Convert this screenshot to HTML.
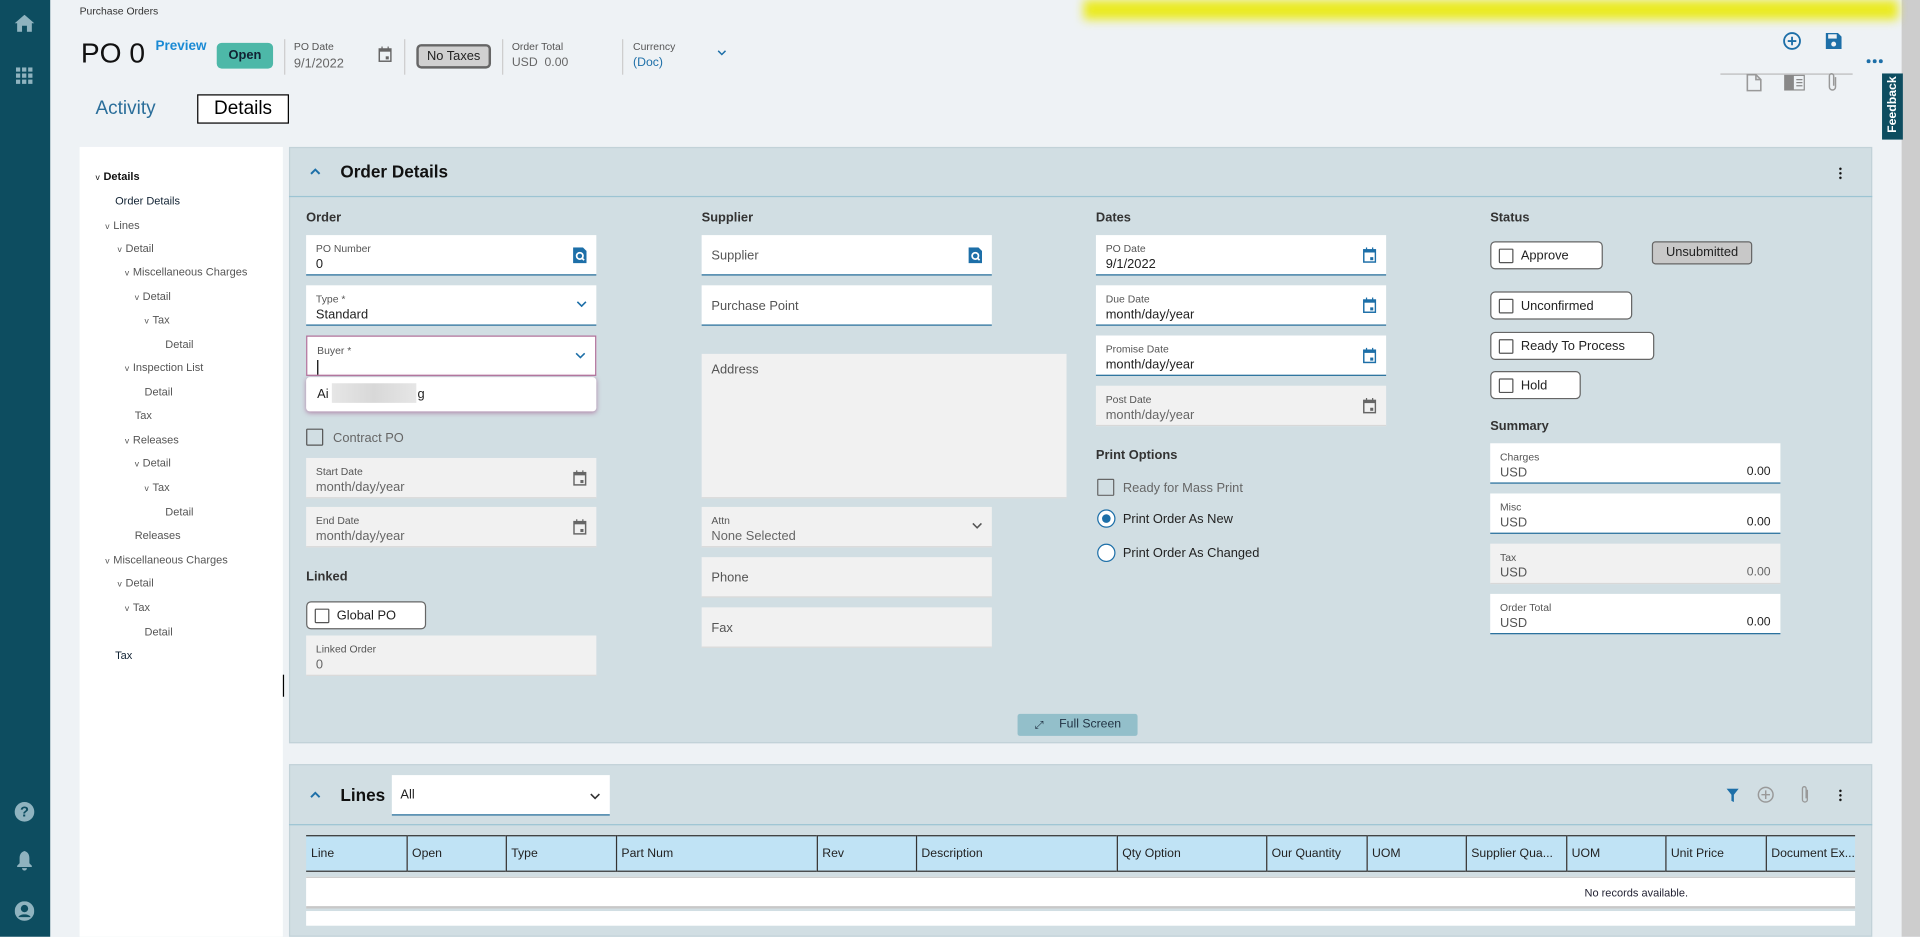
<!DOCTYPE html>
<html><head><meta charset="utf-8"><style>
*{box-sizing:border-box;margin:0;padding:0}
html,body{width:1920px;height:937px;overflow:hidden;background:#eef2f5}
#w{position:absolute;left:0;top:0;width:1568px;height:765px;transform:scale(1.22449);transform-origin:0 0;font-family:"Liberation Sans",sans-serif;color:#222}
.a{position:absolute}
.t{position:absolute;white-space:nowrap}
.fld{position:absolute;width:237px;height:33px;background:#fff;border-bottom:1.5px solid #1f6a98}
.fld.g{background:#f1f1f1;border-bottom:1px solid #d8d8d8}
.fld .l{position:absolute;left:8px;top:6px;font-size:8.5px;color:#555}
.fld .v{position:absolute;left:8px;top:18px;font-size:10.5px;color:#222}
.fld.g .v{color:#666}
.fld .p{position:absolute;left:8px;top:11px;font-size:10.5px;color:#555}
.ic{position:absolute;right:8px;top:10px}
.chev{position:absolute;right:8px;top:13px}
.cb{position:absolute;width:12px;height:12px;border:1.5px solid #555;border-radius:1px;background:#fff}
.bx{position:absolute;height:23px;border:1px solid #666;border-radius:4px;background:#fff;font-size:10.5px}
.bx .cb{left:6px;top:5px}
.bx span{position:absolute;left:24px;top:5px}
.sh{position:absolute;font-size:10.5px;font-weight:bold;color:#333}
.tr{position:absolute;font-size:9px;color:#555;white-space:nowrap}
.tr b{font-weight:normal;font-size:7px;margin-right:3px}
th{background:#c0e3f5;font-weight:normal;text-align:left;font-size:10px;padding-left:4px;border-right:1px solid #333;height:29px;white-space:nowrap;overflow:hidden;text-overflow:ellipsis}
</style></head><body><div id="w">
<div class="a" style="left:0;top:0;width:41px;height:765px;background:#0d4d60"></div>
<svg class="a" style="left:12px;top:12px" width="16" height="14" viewBox="0 0 16 14"><path d="M8 0L0 7h2v7h4V9h4v5h4V7h2z" fill="#8fb3bf"/></svg>
<svg class="a" style="left:13px;top:55px" width="14" height="14"><g fill="#8fb3bf"><rect x="0" y="0" width="3.5" height="3.5"/><rect x="5" y="0" width="3.5" height="3.5"/><rect x="10" y="0" width="3.5" height="3.5"/><rect x="0" y="5" width="3.5" height="3.5"/><rect x="5" y="5" width="3.5" height="3.5"/><rect x="10" y="5" width="3.5" height="3.5"/><rect x="0" y="10" width="3.5" height="3.5"/><rect x="5" y="10" width="3.5" height="3.5"/><rect x="10" y="10" width="3.5" height="3.5"/></g></svg>
<div class="a" style="left:12px;top:655px;width:16px;height:16px;border-radius:50%;background:#8fb3bf;color:#0d4d60;font-size:12px;font-weight:bold;text-align:center;line-height:16px">?</div>
<svg class="a" style="left:13px;top:695px" width="14" height="16" viewBox="0 0 14 16"><path d="M7 0C4 1 3 3 3 6v4L1 12v1h12v-1l-2-2V6c0-3-1-5-4-6zM5 14h4a2 2 0 0 1-4 0z" fill="#8fb3bf"/></svg>
<svg class="a" style="left:12px;top:736px" width="16" height="16"><circle cx="8" cy="8" r="8" fill="#8fb3bf"/><circle cx="8" cy="6" r="3" fill="#0d4d60"/><path d="M3 13c1-3 9-3 10 0" fill="#0d4d60"/></svg>
<div class="a" style="left:1553px;top:0;width:15px;height:765px;background:#cdcdcd"></div>
<div class="a" style="left:885px;top:0;width:665px;height:16px;background:#eaea20;filter:blur(4px)"></div>
<div class="t" style="left:65px;top:4px;font-size:8.5px;color:#333">Purchase Orders</div>
<div class="t" style="left:66px;top:30px;font-size:23px;color:#111">PO 0</div>
<div class="t" style="left:127px;top:32px;font-size:11px;font-weight:bold;color:#1a8ad4">Preview</div>
<div class="a" style="left:177px;top:35px;width:46px;height:21px;background:#4db8a8;border-radius:4px;font-size:10.5px;font-weight:bold;text-align:center;line-height:21px;color:#123">Open</div>
<div class="a" style="left:232px;top:32px;width:1px;height:29px;background:#ccc"></div>
<div class="t" style="left:240px;top:33px;font-size:8.5px;color:#555">PO Date</div>
<div class="t" style="left:240px;top:46px;font-size:10.5px;color:#666">9/1/2022</div>
<svg class="a" style="left:309px;top:38px" width="11" height="13" viewBox="0 0 11 13"><rect x="0.75" y="2" width="9.5" height="10" fill="none" stroke="#666" stroke-width="1.2"/><rect x="0.75" y="2" width="9.5" height="2.2" fill="#666"/><rect x="2.5" y="0" width="1" height="3" fill="#666"/><rect x="7.5" y="0" width="1" height="3" fill="#666"/><rect x="6" y="8" width="2.5" height="2.5" fill="#666"/></svg>
<div class="a" style="left:330px;top:32px;width:1px;height:29px;background:#ccc"></div>
<div class="a" style="left:340px;top:36px;width:61px;height:20px;background:#d0d0d0;border:2px solid #666;border-radius:4px;font-size:10.5px;text-align:center;line-height:16px">No Taxes</div>
<div class="a" style="left:410px;top:32px;width:1px;height:29px;background:#ccc"></div>
<div class="t" style="left:418px;top:33px;font-size:8.5px;color:#555">Order Total</div>
<div class="t" style="left:418px;top:46px;font-size:10px;color:#666">USD&nbsp; 0.00</div>
<div class="a" style="left:508px;top:32px;width:1px;height:29px;background:#ccc"></div>
<div class="t" style="left:517px;top:33px;font-size:8.5px;color:#555">Currency</div>
<div class="t" style="left:517px;top:46px;font-size:10px;color:#1d6fa8">(Doc)</div>
<svg class="a" style="left:586px;top:41px" width="7" height="5"><path d="M0.5 0.5L3.5 3.5L6.5 0.5" fill="none" stroke="#1d6fa8" stroke-width="1.2"/></svg>
<svg class="a" style="left:1456px;top:26px" width="15" height="15"><circle cx="7.5" cy="7.5" r="6.5" fill="none" stroke="#1d6fa8" stroke-width="1.5"/><path d="M7.5 4v7M4 7.5h7" stroke="#1d6fa8" stroke-width="1.5"/></svg>
<svg class="a" style="left:1491px;top:27px" width="13" height="13"><path d="M0 0h10l3 3v10H0z" fill="#1d6fa8"/><rect x="2" y="1" width="7" height="3.5" fill="#eef2f5"/><circle cx="6.5" cy="9" r="2" fill="#eef2f5"/></svg>
<div class="a" style="left:1405px;top:60px;width:108px;height:1px;background:#bbb"></div>
<svg class="a" style="left:1524px;top:48px" width="14" height="4"><circle cx="2" cy="2" r="1.6" fill="#1d6fa8"/><circle cx="7" cy="2" r="1.6" fill="#1d6fa8"/><circle cx="12" cy="2" r="1.6" fill="#1d6fa8"/></svg>
<svg class="a" style="left:1426px;top:60px" width="13" height="15"><path d="M1 1h7l4 4v9H1z" fill="none" stroke="#999" stroke-width="1.3"/><path d="M8 1v4h4" fill="none" stroke="#999" stroke-width="1.3"/></svg>
<svg class="a" style="left:1457px;top:61px" width="17" height="13"><rect x="0" y="0" width="17" height="13" fill="#888"/><rect x="8" y="1" width="8" height="11" fill="#eef2f5"/><path d="M10 4h5M10 6.5h5M10 9h5" stroke="#888"/></svg>
<svg class="a" style="left:1492px;top:59px" width="10" height="17"><path d="M7 4v8a2.5 2.5 0 0 1-5 0V3a1.7 1.7 0 0 1 3.5 0v8" fill="none" stroke="#999" stroke-width="1.2"/></svg>
<div class="a" style="left:1537px;top:60px;width:17px;height:54px;background:#0d4d60"></div>
<div class="t" style="left:1523px;top:80px;font-size:10px;font-weight:bold;color:#fff;transform:rotate(-90deg);width:46px;text-align:center">Feedback</div>
<div class="t" style="left:78px;top:80px;font-size:15.5px;color:#2a6e9a">Activity</div>
<div class="a" style="left:161px;top:77px;width:75px;height:24px;border:1px solid #000;background:#fff;font-size:15.5px;text-align:center;line-height:22px;color:#000">Details</div>
<div class="a" style="left:65px;top:120px;width:166px;height:645px;background:#fff"></div>
<div class="tr" style="left:78px;top:139px;color:#111;font-weight:bold"><b>v</b>Details</div>
<div class="tr" style="left:94px;top:159px;color:#123">Order Details</div>
<div class="tr" style="left:86px;top:179px"><b>v</b>Lines</div>
<div class="tr" style="left:96px;top:198px"><b>v</b>Detail</div>
<div class="tr" style="left:102px;top:217px"><b>v</b>Miscellaneous Charges</div>
<div class="tr" style="left:110px;top:237px"><b>v</b>Detail</div>
<div class="tr" style="left:118px;top:256px"><b>v</b>Tax</div>
<div class="tr" style="left:135px;top:276px">Detail</div>
<div class="tr" style="left:102px;top:295px"><b>v</b>Inspection List</div>
<div class="tr" style="left:118px;top:315px">Detail</div>
<div class="tr" style="left:110px;top:334px">Tax</div>
<div class="tr" style="left:102px;top:354px"><b>v</b>Releases</div>
<div class="tr" style="left:110px;top:373px"><b>v</b>Detail</div>
<div class="tr" style="left:118px;top:393px"><b>v</b>Tax</div>
<div class="tr" style="left:135px;top:413px">Detail</div>
<div class="tr" style="left:110px;top:432px">Releases</div>
<div class="tr" style="left:86px;top:452px"><b>v</b>Miscellaneous Charges</div>
<div class="tr" style="left:96px;top:471px"><b>v</b>Detail</div>
<div class="tr" style="left:102px;top:491px"><b>v</b>Tax</div>
<div class="tr" style="left:118px;top:511px">Detail</div>
<div class="tr" style="left:94px;top:530px;color:#123">Tax</div>
<div class="a" style="left:231px;top:551px;width:1px;height:18px;background:#000"></div>
<div class="a" style="left:236px;top:120px;width:1293px;height:487px;background:#d1dee3;border:1px solid #c2d2d8"></div>
<div class="a" style="left:236px;top:160px;width:1293px;height:1px;background:#9cc4d3"></div>
<svg class="a" style="left:253px;top:137px" width="9" height="6"><path d="M1 5L4.5 1.5L8 5" fill="none" stroke="#1d6fa8" stroke-width="1.6"/></svg>
<div class="t" style="left:278px;top:132px;font-size:14px;font-weight:bold;color:#111">Order Details</div>
<div class="a" style="left:1502px;top:136px;width:2px;height:11px;background:radial-gradient(circle,#111 0.9px,transparent 1.1px) 0 0/2px 3.7px"></div>
<div class="sh" style="left:250px;top:172px">Order</div>
<div class="sh" style="left:573px;top:172px">Supplier</div>
<div class="sh" style="left:895px;top:172px">Dates</div>
<div class="sh" style="left:1217px;top:172px">Status</div>
<div class="fld" style="left:250px;top:192px"><div class="l">PO Number</div><div class="v">0</div><svg class="ic" width="11" height="13"><path d="M0 0h8l3 3v10H0z" fill="#1d6fa8"/><circle cx="5.5" cy="7" r="2.6" fill="none" stroke="#fff" stroke-width="1.4"/><path d="M7 8.5l2 2" stroke="#fff" stroke-width="1.4"/></svg></div>
<div class="fld" style="left:250px;top:233px"><div class="l">Type *</div><div class="v">Standard</div><svg class="chev" width="8" height="5"><path d="M0.5 0.5L4 4L7.5 0.5" fill="none" stroke="#1d6fa8" stroke-width="1.3"/></svg></div>
<div class="fld" style="left:250px;top:274px;border:1px solid #b0709a"><div class="l">Buyer *</div><div class="a" style="left:8px;top:19px;width:1px;height:12px;background:#000"></div><svg class="chev" width="8" height="5"><path d="M0.5 0.5L4 4L7.5 0.5" fill="none" stroke="#1d6fa8" stroke-width="1.3"/></svg></div>
<div class="a" style="left:250px;top:308px;width:237px;height:28px;background:#fff;border-radius:3px;box-shadow:0 1px 4px rgba(150,60,120,.55)"></div>
<div class="t" style="left:259px;top:316px;font-size:10.5px">Ai</div>
<div class="a" style="left:271px;top:313px;width:69px;height:16px;background:linear-gradient(90deg,#e6e6e6,#d8d8d8,#e6e6e6)"></div>
<div class="t" style="left:341px;top:316px;font-size:10.5px">g</div>
<div class="cb" style="left:250px;top:350px;width:14px;height:14px;background:none"></div>
<div class="t" style="left:272px;top:352px;font-size:10.5px;color:#666">Contract PO</div>
<div class="fld g" style="left:250px;top:374px"><div class="l">Start Date</div><div class="v">month/day/year</div><svg class="ic" width="11" height="13" viewBox="0 0 11 13"><rect x="0.75" y="2" width="9.5" height="10" fill="none" stroke="#666" stroke-width="1.2"/><rect x="0.75" y="2" width="9.5" height="2.2" fill="#666"/><rect x="2.5" y="0" width="1" height="3" fill="#666"/><rect x="7.5" y="0" width="1" height="3" fill="#666"/><rect x="6" y="8" width="2.5" height="2.5" fill="#666"/></svg></div>
<div class="fld g" style="left:250px;top:414px"><div class="l">End Date</div><div class="v">month/day/year</div><svg class="ic" width="11" height="13" viewBox="0 0 11 13"><rect x="0.75" y="2" width="9.5" height="10" fill="none" stroke="#666" stroke-width="1.2"/><rect x="0.75" y="2" width="9.5" height="2.2" fill="#666"/><rect x="2.5" y="0" width="1" height="3" fill="#666"/><rect x="7.5" y="0" width="1" height="3" fill="#666"/><rect x="6" y="8" width="2.5" height="2.5" fill="#666"/></svg></div>
<div class="sh" style="left:250px;top:465px">Linked</div>
<div class="bx" style="left:250px;top:491px;width:98px"><div class="cb"></div><span>Global PO</span></div>
<div class="fld g" style="left:250px;top:519px"><div class="l">Linked Order</div><div class="v">0</div></div>
<div class="fld" style="left:573px;top:192px"><div class="p">Supplier</div><svg class="ic" width="11" height="13"><path d="M0 0h8l3 3v10H0z" fill="#1d6fa8"/><circle cx="5.5" cy="7" r="2.6" fill="none" stroke="#fff" stroke-width="1.4"/><path d="M7 8.5l2 2" stroke="#fff" stroke-width="1.4"/></svg></div>
<div class="fld" style="left:573px;top:233px"><div class="p">Purchase Point</div></div>
<div class="a" style="left:573px;top:289px;width:298px;height:118px;background:#f1f1f1;border-bottom:1px solid #d8d8d8"><div class="t" style="left:8px;top:7px;font-size:10.5px;color:#555">Address</div></div>
<div class="fld g" style="left:573px;top:414px"><div class="l">Attn</div><div class="v">None Selected</div><svg class="chev" width="8" height="5"><path d="M0.5 0.5L4 4L7.5 0.5" fill="none" stroke="#555" stroke-width="1.3"/></svg></div>
<div class="fld g" style="left:573px;top:455px"><div class="p">Phone</div></div>
<div class="fld g" style="left:573px;top:496px"><div class="p">Fax</div></div>
<div class="fld" style="left:895px;top:192px"><div class="l">PO Date</div><div class="v">9/1/2022</div><svg class="ic" width="11" height="13" viewBox="0 0 11 13"><rect x="0.75" y="2" width="9.5" height="10" fill="none" stroke="#1d6fa8" stroke-width="1.2"/><rect x="0.75" y="2" width="9.5" height="2.2" fill="#1d6fa8"/><rect x="2.5" y="0" width="1" height="3" fill="#1d6fa8"/><rect x="7.5" y="0" width="1" height="3" fill="#1d6fa8"/><rect x="6" y="8" width="2.5" height="2.5" fill="#1d6fa8"/></svg></div>
<div class="fld" style="left:895px;top:233px"><div class="l">Due Date</div><div class="v">month/day/year</div><svg class="ic" width="11" height="13" viewBox="0 0 11 13"><rect x="0.75" y="2" width="9.5" height="10" fill="none" stroke="#1d6fa8" stroke-width="1.2"/><rect x="0.75" y="2" width="9.5" height="2.2" fill="#1d6fa8"/><rect x="2.5" y="0" width="1" height="3" fill="#1d6fa8"/><rect x="7.5" y="0" width="1" height="3" fill="#1d6fa8"/><rect x="6" y="8" width="2.5" height="2.5" fill="#1d6fa8"/></svg></div>
<div class="fld" style="left:895px;top:274px"><div class="l">Promise Date</div><div class="v">month/day/year</div><svg class="ic" width="11" height="13" viewBox="0 0 11 13"><rect x="0.75" y="2" width="9.5" height="10" fill="none" stroke="#1d6fa8" stroke-width="1.2"/><rect x="0.75" y="2" width="9.5" height="2.2" fill="#1d6fa8"/><rect x="2.5" y="0" width="1" height="3" fill="#1d6fa8"/><rect x="7.5" y="0" width="1" height="3" fill="#1d6fa8"/><rect x="6" y="8" width="2.5" height="2.5" fill="#1d6fa8"/></svg></div>
<div class="fld g" style="left:895px;top:315px"><div class="l">Post Date</div><div class="v">month/day/year</div><svg class="ic" width="11" height="13" viewBox="0 0 11 13"><rect x="0.75" y="2" width="9.5" height="10" fill="none" stroke="#666" stroke-width="1.2"/><rect x="0.75" y="2" width="9.5" height="2.2" fill="#666"/><rect x="2.5" y="0" width="1" height="3" fill="#666"/><rect x="7.5" y="0" width="1" height="3" fill="#666"/><rect x="6" y="8" width="2.5" height="2.5" fill="#666"/></svg></div>
<div class="sh" style="left:895px;top:366px">Print Options</div>
<div class="cb" style="left:896px;top:391px;width:14px;height:14px;background:none;border-color:#666"></div>
<div class="t" style="left:917px;top:393px;font-size:10.5px;color:#666">Ready for Mass Print</div>
<div class="a" style="left:896px;top:416px;width:15px;height:15px;border:1.5px solid #1d6fa8;border-radius:50%;background:#fff"><div class="a" style="left:2.5px;top:2.5px;width:7px;height:7px;border-radius:50%;background:#1d6fa8"></div></div>
<div class="t" style="left:917px;top:418px;font-size:10.5px;color:#222">Print Order As New</div>
<div class="a" style="left:896px;top:444px;width:15px;height:15px;border:1.5px solid #1d6fa8;border-radius:50%;background:#fff"></div>
<div class="t" style="left:917px;top:446px;font-size:10.5px;color:#222">Print Order As Changed</div>
<div class="bx" style="left:1217px;top:197px;width:92px"><div class="cb"></div><span>Approve</span></div>
<div class="a" style="left:1349px;top:197px;width:82px;height:19px;background:#c8c8c8;border:1.5px solid #666;border-radius:3px;font-size:10.5px;text-align:center;line-height:16px">Unsubmitted</div>
<div class="bx" style="left:1217px;top:238px;width:116px"><div class="cb"></div><span>Unconfirmed</span></div>
<div class="bx" style="left:1217px;top:271px;width:134px"><div class="cb"></div><span>Ready To Process</span></div>
<div class="bx" style="left:1217px;top:303px;width:74px"><div class="cb"></div><span>Hold</span></div>
<div class="sh" style="left:1217px;top:342px">Summary</div>
<div class="fld" style="left:1217px;top:362px;width:237px"><div class="l">Charges</div><div class="v" style="color:#555">USD</div><div class="a" style="right:8px;top:18px;font-size:10px">0.00</div></div>
<div class="fld" style="left:1217px;top:403px;width:237px"><div class="l">Misc</div><div class="v" style="color:#555">USD</div><div class="a" style="right:8px;top:18px;font-size:10px">0.00</div></div>
<div class="fld g" style="left:1217px;top:444px;width:237px"><div class="l">Tax</div><div class="v" style="color:#555">USD</div><div class="a" style="right:8px;top:18px;font-size:10px;color:#666">0.00</div></div>
<div class="fld" style="left:1217px;top:485px;width:237px"><div class="l">Order Total</div><div class="v" style="color:#555">USD</div><div class="a" style="right:8px;top:18px;font-size:10px">0.00</div></div>
<div class="a" style="left:831px;top:583px;width:98px;height:18px;background:#93bfca;border-radius:2px;font-size:10px;line-height:18px;color:#234"><span style="position:absolute;left:14px;top:0;font-size:9px">⤢</span><span style="position:absolute;left:34px">Full Screen</span></div>
<div class="a" style="left:236px;top:624px;width:1293px;height:141px;background:#d1dee3;border:1px solid #c2d2d8"></div>
<div class="a" style="left:236px;top:673px;width:1293px;height:1px;background:#9cc4d3"></div>
<svg class="a" style="left:253px;top:646px" width="9" height="6"><path d="M1 5L4.5 1.5L8 5" fill="none" stroke="#1d6fa8" stroke-width="1.6"/></svg>
<div class="t" style="left:278px;top:641px;font-size:14px;font-weight:bold;color:#111">Lines</div>
<div class="a" style="left:320px;top:633px;width:178px;height:33px;background:#fff;border-bottom:1.5px solid #1f6a98"><div class="t" style="left:7px;top:10px;font-size:10.5px">All</div><svg class="a" style="left:162px;top:15px" width="8" height="5"><path d="M0.5 0.5L4 4L7.5 0.5" fill="none" stroke="#333" stroke-width="1.3"/></svg></div>
<svg class="a" style="left:1410px;top:644px" width="10" height="11"><path d="M0 0h10L6 5v6L4 10V5z" fill="#1d6fa8"/></svg>
<svg class="a" style="left:1435px;top:642px" width="14" height="14"><circle cx="7" cy="7" r="6" fill="none" stroke="#999" stroke-width="1.2"/><path d="M7 3.5v7M3.5 7h7" stroke="#999" stroke-width="1.2"/></svg>
<svg class="a" style="left:1470px;top:641px" width="8" height="16"><path d="M6 4v8a2 2 0 0 1-4 0V3a1.5 1.5 0 0 1 3 0v8" fill="none" stroke="#999" stroke-width="1.1"/></svg>
<div class="a" style="left:1502px;top:644px;width:2px;height:11px;background:radial-gradient(circle,#111 0.9px,transparent 1.1px) 0 0/2px 3.7px"></div>
<table class="a" style="left:250px;top:682px;width:1265px;border-collapse:collapse;border-top:1.5px solid #333;border-bottom:1.5px solid #333;table-layout:fixed">
<tr><th style="width:82px">Line</th><th style="width:81px">Open</th><th style="width:90px">Type</th><th style="width:164px">Part Num</th><th style="width:81px">Rev</th><th style="width:164px">Description</th><th style="width:122px">Qty Option</th><th style="width:82px">Our Quantity</th><th style="width:81px">UOM</th><th style="width:82px">Supplier Qua...</th><th style="width:81px">UOM</th><th style="width:82px">Unit Price</th><th style="border-right:0">Document Ex...</th></tr></table>
<div class="a" style="left:250px;top:716px;width:1265px;height:26px;background:#fff;border-top:1px solid #ccc;border-bottom:2px solid #c8c8c8"></div>
<div class="t" style="left:1294px;top:724px;font-size:9px;color:#223">No records available.</div>
<div class="a" style="left:250px;top:744px;width:1265px;height:12px;background:#fff"></div>
</div></body></html>
